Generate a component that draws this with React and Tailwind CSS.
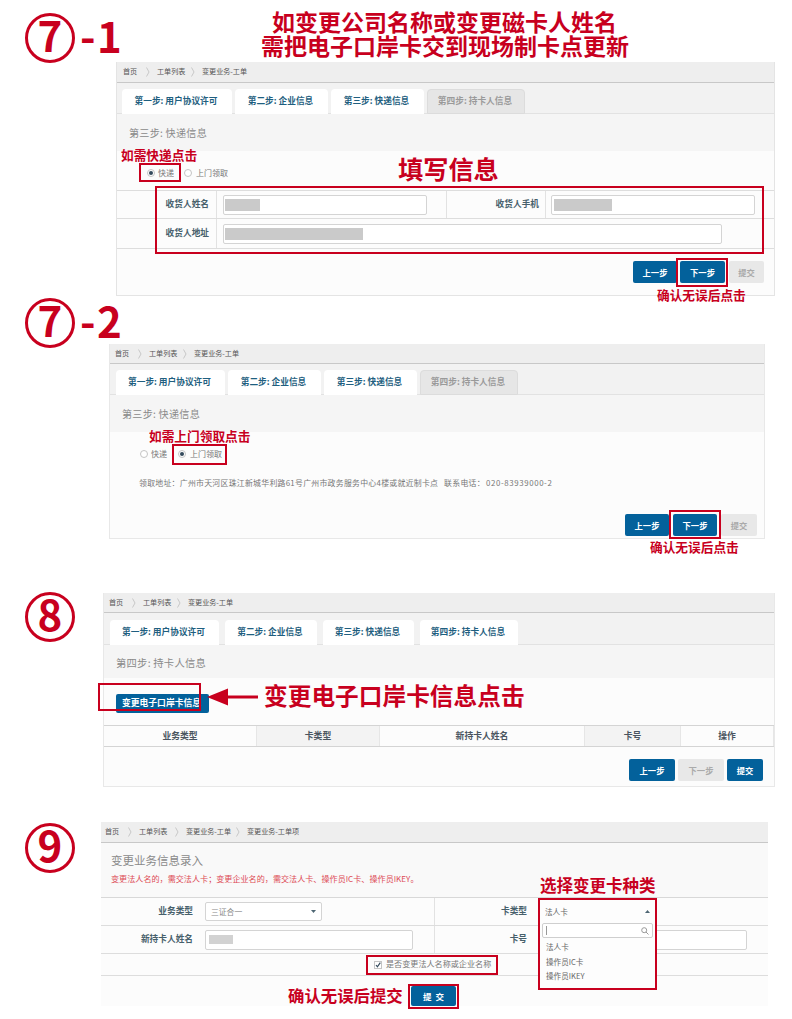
import React from "react";

const Badge = ({ n, suffix, className }) => (
  <div className={`absolute left-[25px] flex h-[50px] items-center text-[42px] font-bold leading-none text-[#c8001e] ${className}`}>
    <span className="flex h-[50px] w-[50px] items-center justify-center rounded-full border-[3px] border-[#c8001e] pb-[8px]">{n}</span>
    {suffix && <span className="flex pb-[6px] pl-[5px]"><span className="w-[17px]">-</span>{suffix}</span>}
  </div>
);

const Note = ({ className, children }) => (
  <div className={`absolute whitespace-nowrap font-bold leading-none text-[#c8001e] ${className}`}>{children}</div>
);

const Frame = ({ className }) => <div className={`absolute border-[#c8001e] ${className}`} />;

const Crumb = ({ items, className }) => (
  <div className={`flex shrink-0 items-center border-b border-[#c8c8c8] bg-[#eeeeee] text-[7.1px] leading-none text-[#555] ${className}`}>
    {items.map(([t, w], i) => (
      <div key={t} className={`flex items-center ${w}`}>
        <span className="flex-1">{t}</span>
        {i < items.length - 1 && (
          <svg className="mr-[7px] h-[10px] w-[4px]" viewBox="0 0 4 10" fill="none" stroke="#c8c8c8" strokeWidth="1">
            <path d="M0.5 0.5 3 5 .5 9.5" />
          </svg>
        )}
      </div>
    ))}
  </div>
);

const Tabs = ({ widths, gap, last, className }) => (
  <div className={`flex shrink-0 items-end border-b border-[#e2e2e2] bg-[#f2f2f2] ${gap} ${className}`}>
    {["第一步: 用户协议许可", "第二步: 企业信息", "第三步: 快递信息", "第四步: 持卡人信息"].map((t, i) => (
      <div
        key={t}
        className={`-mb-px flex h-[25px] items-center justify-center rounded-t-sm pr-[2px] text-[8.7px] font-bold leading-none ${widths[i]} ${
          i === 3 && !last ? "border border-[#dcdcdc] bg-[#e6e6e6] text-[#9a9a9a]" : "bg-white text-[#1f5f80]"
        }`}
      >
        {t}
      </div>
    ))}
  </div>
);

const Title = ({ className, children }) => (
  <div className={`flex shrink-0 items-center bg-[#f5f5f5] pt-[2px] leading-none tracking-[0.25px] text-[#8a8a8a] ${className}`}>{children}</div>
);

const Btn = ({ off, className, children }) => (
  <div
    className={`flex items-center justify-center rounded-[2px] font-bold leading-none ${
      off ? "bg-[#e8e8e8] text-[#aaa]" : "bg-[#03619b] text-white"
    } ${className}`}
  >
    {children}
  </div>
);

const Radio = ({ on }) => (
  <span className="flex h-[8px] w-[8px] items-center justify-center rounded-full border border-[#c4c4c4] bg-white">
    {on && <span className="h-[4px] w-[4px] rounded-full bg-[#334a5c]" />}
  </span>
);

const Field = ({ className, fill }) => (
  <div className={`flex items-center rounded-[2px] border border-[#d4d4d4] bg-white pl-px ${className}`}>
    {fill && <div className={fill} />}
  </div>
);

const Label = ({ className, children }) => (
  <div className={`flex h-full items-center justify-end text-[8.7px] font-bold leading-none text-[#47606b] ${className}`}>{children}</div>
);

const crumbs3 = [["首页", "w-[34px]"], ["工单列表", "w-[45px]"], ["变更业务-工单", "w-[60px]"]];
const rowLine = "flex shrink-0 items-center border-b border-[#dddddd]";

export default function App() {
  return (
    <div
      className="relative flex h-[1019px] w-[792px] flex-col overflow-hidden bg-white"
      style={{ fontFamily: '"Noto Sans CJK SC", "Noto Sans", sans-serif' }}
      lang="zh-CN"
    >
      <section className="ml-[116px] mt-[62px] flex h-[234px] w-[659px] flex-col border border-t-0 border-[#e4e4e4] bg-[#fcfcfc]">
        <Crumb className="h-[21px] pl-[6px]" items={crumbs3} />
        <Tabs className="h-[31px] pl-[5px]" gap="gap-[3px]" widths={["w-[110px]", "w-[93px]", "w-[93px]", "w-[98px]"]} />
        <Title className="h-[37px] pl-[12px] text-[10.1px]">第三步: 快递信息</Title>
        <div className="flex h-[40px] shrink-0 items-center border-b border-[#dddddd] pl-[30px] pt-[4px] text-[8px] leading-none text-[#777]">
          <Radio on /><span className="w-[29px] pl-[3px]">快递</span>
          <Radio /><span className="pl-[4px]">上门领取</span>
        </div>
        <div className={`${rowLine} h-[28px]`}>
          <Label className="w-[100px] border-r border-[#e2e2e2] pr-[7px]">收货人姓名</Label>
          <Field className="ml-[6px] h-[20px] w-[204px]" fill="h-[12px] w-[35px] bg-[#cacaca]" />
          <Label className="ml-[19px] w-[100px] border-x border-[#e2e2e2] pr-[6px]">收货人手机</Label>
          <Field className="ml-[5px] h-[20px] w-[204px]" fill="ml-px h-[12px] w-[58px] bg-[#cacaca]" />
        </div>
        <div className={`${rowLine} h-[30px]`}>
          <Label className="w-[100px] border-r border-[#e2e2e2] pr-[7px]">收货人地址</Label>
          <Field className="ml-[6px] h-[20px] w-[499px]" fill="h-[12px] w-[138px] bg-[#cacaca]" />
        </div>
        <div className="flex pl-[516px] pt-[12px] text-[8.3px]">
          <Btn className="h-[22px] w-[44px]">上一步</Btn>
          <Btn className="ml-[3px] h-[22px] w-[45px]">下一步</Btn>
          <Btn off className="ml-[4px] h-[22px] w-[35px]">提交</Btn>
        </div>
      </section>

      <section className="ml-[109px] mt-[48px] flex h-[195px] w-[656px] flex-col border border-t-0 border-[#e8e8e8] bg-[#fcfcfc]">
        <Crumb className="h-[20px] pl-[5px]" items={crumbs3} />
        <Tabs className="h-[31px] pl-[6px]" gap="gap-[3px]" widths={["w-[109px]", "w-[93px]", "w-[93px]", "w-[98px]"]} />
        <Title className="h-[37px] pl-[12px] text-[10.1px]">第三步: 快递信息</Title>
        <div className="flex h-[44px] shrink-0 items-center pl-[30px] text-[8px] leading-none text-[#777]">
          <Radio /><span className="w-[30px] pl-[3px]">快递</span>
          <Radio on /><span className="pl-[4px]">上门领取</span>
        </div>
        <div className="flex h-[14px] shrink-0 items-center whitespace-nowrap pl-[29px] text-[7.9px] leading-none text-[#777]">
          <span className="w-[305px] tracking-[0.26px]">领取地址：广州市天河区珠江新城华利路61号广州市政务服务中心4楼或就近制卡点</span>
          <span className="w-[42px] tracking-[0.3px]">联系电话：</span>
          <span className="tracking-[0.6px]">020-83939000-2</span>
        </div>
        <div className="flex pl-[515px] pt-[24px] text-[8.3px]">
          <Btn className="h-[22px] w-[44px]">上一步</Btn>
          <Btn className="ml-[4px] h-[22px] w-[44px]">下一步</Btn>
          <Btn off className="ml-[4px] h-[22px] w-[36px]">提交</Btn>
        </div>
      </section>

      <section className="ml-[103px] mt-[54px] flex h-[194px] w-[672px] flex-col border border-t-0 border-[#e8e8e8] bg-[#fcfcfc]">
        <Crumb className="h-[20px] pl-[5px]" items={crumbs3} />
        <Tabs last className="h-[32px] pl-[6px]" gap="gap-[6px]" widths={["w-[109px]", "w-[92px]", "w-[91px]", "w-[98px]"]} />
        <Title className="h-[33px] pl-[12px] pt-[4px] text-[10.3px]">第四步: 持卡人信息</Title>
        <div className="flex h-[47px] shrink-0 pl-[12px] pt-[16px] text-[8.8px]">
          <Btn className="h-[19px] w-[93px] pr-[2px]">变更电子口岸卡信息</Btn>
        </div>
        <div className="flex h-[22px] shrink-0 border-y border-[#d4d4d4] text-[8.8px] font-bold leading-none text-[#4a5560]">
          {[["业务类型", "w-[153px]"], ["卡类型", "w-[123px] bg-[#f3f3f3]"], ["新持卡人姓名", "w-[205px]"], ["卡号", "w-[96px] bg-[#f3f3f3]"], ["操作", "flex-1"]].map(([t, c]) => (
            <div key={t} className={`flex items-center justify-center border-r border-[#e6e6e6] ${c}`}>{t}</div>
          ))}
        </div>
        <div className="flex pl-[525px] pt-[12px] text-[8.3px]">
          <Btn className="h-[22px] w-[46px]">上一步</Btn>
          <Btn off className="ml-[3px] h-[22px] w-[46px]">下一步</Btn>
          <Btn className="ml-[3px] h-[22px] w-[36px]">提交</Btn>
        </div>
      </section>

      <section className="ml-[101px] mt-[35px] flex h-[184px] w-[667px] flex-col bg-[#fcfcfc]">
        <Crumb
          className="h-[21px] pl-[4px]"
          items={[["首页", "w-[34px]"], ["工单列表", "w-[47px]"], ["变更业务-工单", "w-[61px]"], ["变更业务-工单项", "w-[70px]"]]}
        />
        <div className="flex h-[55px] shrink-0 flex-col border-b border-[#d8d8d8] bg-[#f9f9f9] pl-[10px] pt-[12px] leading-none">
          <div className="text-[11.5px] text-[#8a8a8a]">变更业务信息录入</div>
          <div className="mt-[8px] whitespace-nowrap text-[8.1px] text-[#dd4a55]">变更法人名的，需交法人卡；变更企业名的，需交法人卡、操作员IC卡、操作员IKEY。</div>
        </div>
        <div className={`${rowLine} h-[28px]`}>
          <Label className="w-[92px]">业务类型</Label>
          <div className="ml-[12px] flex h-[19px] w-[117px] items-center justify-between rounded-[2px] border border-[#d4d4d4] bg-white px-[5px] text-[7.8px] leading-none text-[#888]">
            三证合一
            <svg className="h-[3px] w-[5px]" viewBox="0 0 5 3"><path d="M0 0h5L2.5 3z" fill="#4d6673" /></svg>
          </div>
          <Label className="ml-[112px] w-[93px] border-l border-[#e2e2e2]">卡类型</Label>
        </div>
        <div className={`${rowLine} h-[28px]`}>
          <Label className="w-[92px]">新持卡人姓名</Label>
          <Field className="ml-[12px] h-[20px] w-[208px]" fill="ml-[2px] h-[9px] w-[24px] bg-[#d2d2d2]" />
          <Label className="ml-[21px] w-[93px] border-l border-[#e2e2e2]">卡号</Label>
          <Field className="ml-[12px] h-[20px] w-[208px]" />
        </div>
        <div className={`${rowLine} h-[22px] pl-[273px] text-[8.1px] leading-none text-[#777]`}>
          <span className="mr-[4px] flex h-[8px] w-[8px] items-center justify-center border border-[#c4c4c4] bg-white">
            <svg className="h-[6px] w-[6px]" viewBox="0 0 6 6" fill="none" stroke="#334a5c" strokeWidth="1.2"><path d="M1 3l1.4 1.8L5.3.7" /></svg>
          </span>
          是否变更法人名称或企业名称
        </div>
        <div className="flex pl-[310px] pt-[10px] text-[8.5px]">
          <Btn className="h-[20px] w-[45px] whitespace-pre">提  交</Btn>
        </div>
      </section>

      <Badge n="7" suffix="1" className="top-[13px]" />
      <Badge n="7" suffix="2" className="top-[298px]" />
      <Badge n="8" className="top-[592px]" />
      <Badge n="9" className="top-[823px]" />

      <Note className="left-[272px] top-[10px] text-[23px]">如变更公司名称或变更磁卡人姓名</Note>
      <Note className="left-[261px] top-[34px] text-[23px]">需把电子口岸卡交到现场制卡点更新</Note>
      <Note className="left-[121px] top-[149px] text-[12.7px]">如需快递点击</Note>
      <Note className="left-[398px] top-[156px] text-[25.2px]">填写信息</Note>
      <Note className="left-[657px] top-[289px] text-[12.7px]">确认无误后点击</Note>
      <Frame className="left-[139px] top-[163px] h-[19px] w-[42px] border-2" />
      <Frame className="left-[155px] top-[186px] h-[68px] w-[609px] border-2" />
      <Frame className="left-[676px] top-[258px] h-[29px] w-[52px] border-2" />

      <Note className="left-[149px] top-[430px] text-[12.7px]">如需上门领取点击</Note>
      <Note className="left-[650px] top-[541px] text-[12.7px]">确认无误后点击</Note>
      <Frame className="left-[172px] top-[444px] h-[21px] w-[55px] border-2" />
      <Frame className="left-[669px] top-[510px] h-[29px] w-[52px] border-2" />

      <Frame className="left-[98px] top-[683px] h-[28px] w-[103px] border-2" />
      <svg className="absolute left-[207px] top-[688px] h-[18px] w-[52px]" viewBox="0 0 52 18" fill="#c8001e">
        <path d="M0 9 21 .5V7.5H51v3H21v7z" />
      </svg>
      <Note className="left-[264px] top-[684px] text-[23.7px]">变更电子口岸卡信息点击</Note>

      <Note className="left-[540px] top-[877px] text-[16.5px]">选择变更卡种类</Note>
      <div className="absolute left-[538px] top-[898px] flex h-[92px] w-[119px] flex-col border-2 border-[#c8001e] bg-[#fdfdfd] text-[7.6px] leading-none text-[#666]">
        <div className="flex h-[23px] items-center justify-between pl-[5px] pr-[5px]">
          法人卡
          <svg className="h-[3px] w-[5px]" viewBox="0 0 5 3"><path d="M0 3h5L2.5 0z" fill="#4d6673" /></svg>
        </div>
        <div className="mx-[2px] flex h-[15px] items-center justify-between rounded-[2px] border border-[#cfcfcf] bg-white px-[3px]">
          <span className="h-[9px] w-px bg-[#999]" />
          <svg className="h-[8px] w-[8px]" viewBox="0 0 8 8" fill="none" stroke="#999" strokeWidth="1"><circle cx="3.2" cy="3.2" r="2.5" /><path d="M5 5l2.5 2.5" /></svg>
        </div>
        <div className="flex flex-col gap-[7px] pl-[6px] pt-[5px]">
          <span>法人卡</span>
          <span>操作员IC卡</span>
          <span>操作员IKEY</span>
        </div>
      </div>
      <Frame className="left-[366px] top-[955px] h-[20px] w-[132px] border-2" />
      <Note className="left-[288px] top-[987px] text-[16.4px]">确认无误后提交</Note>
      <Frame className="left-[408px] top-[984px] h-[25px] w-[51px] border-2" />
    </div>
  );
}
